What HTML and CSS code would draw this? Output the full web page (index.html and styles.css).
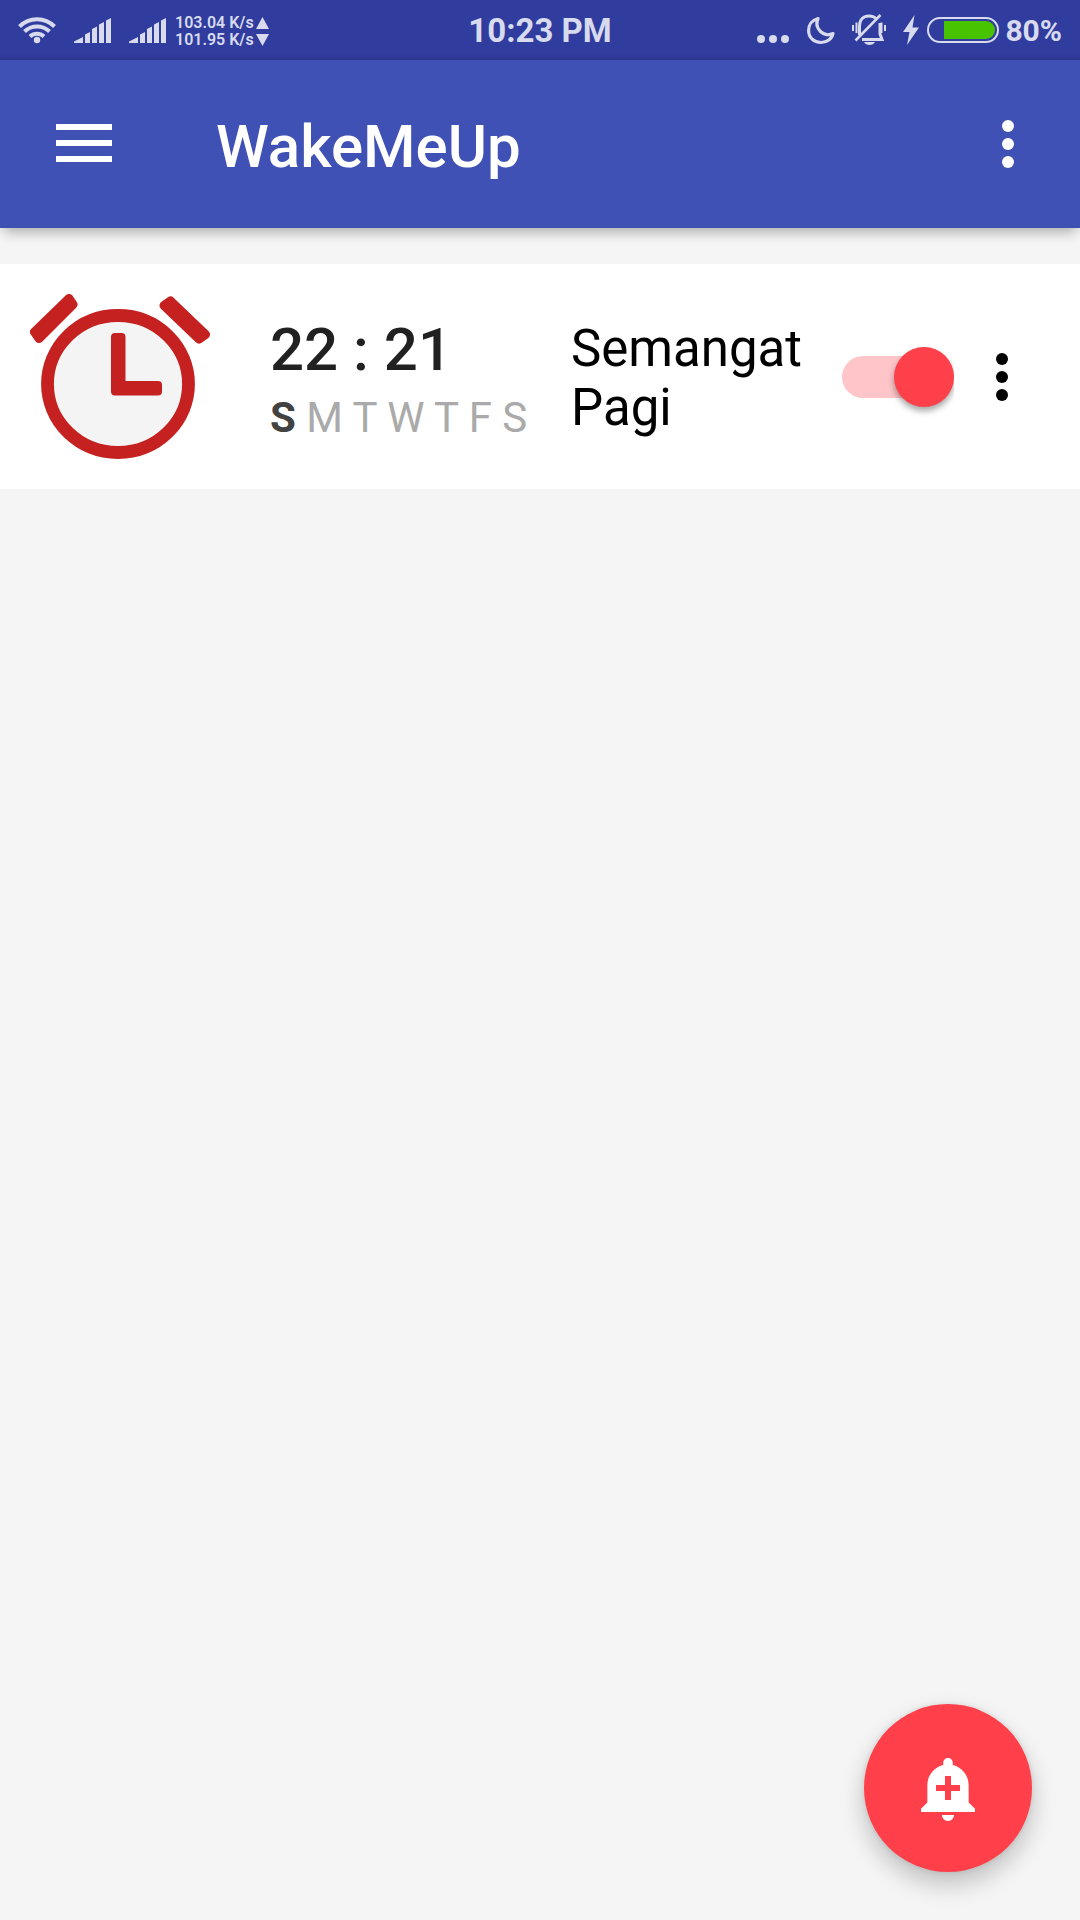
FILE: index.html
```html
<!DOCTYPE html>
<html lang="en">
<head>
<meta charset="utf-8">
<meta name="viewport" content="width=device-width, initial-scale=1">
<title>WakeMeUp</title>
<link rel="stylesheet" href="styles.css">
</head>
<body>
<div class="status">
  <div class="status-group">
    <svg class="wifi" viewBox="0 0 38 28" aria-hidden="true">
      <g fill="none" stroke="currentColor" stroke-width="4">
        <path d="M1.500 10.500A24.500 24.500 0 0 1 36.500 10.500"/>
        <path d="M6.500 15.500A18 18 0 0 1 31.500 15.500"/>
        <path d="M12 20.500A10.500 10.500 0 0 1 26 20.500"/>
      </g>
      <circle cx="19" cy="24" r="3.200" fill="currentColor"/>
    </svg>
    <svg class="signal" viewBox="0 0 37 28" aria-hidden="true"><path fill="currentColor" d="M0 27V25.500L9 21V27ZM11 27V18.500L16 16V27ZM18 27V13L23 10.500V27ZM25 27V8.500L30 6V27ZM32 27V4.500L37 2V27Z"/></svg>
    <svg class="signal" viewBox="0 0 37 28" aria-hidden="true"><path fill="currentColor" d="M0 27V25.500L9 21V27ZM11 27V18.500L16 16V27ZM18 27V13L23 10.500V27ZM25 27V8.500L30 6V27ZM32 27V4.500L37 2V27Z"/></svg>
    <div class="speed">
      <span>103.04 K/s</span>
      <svg viewBox="0 0 13 12" aria-hidden="true"><path fill="currentColor" d="M6.500 0L13 12H0Z"/></svg>
      <span>101.95 K/s</span>
      <svg viewBox="0 0 13 12" aria-hidden="true"><path fill="currentColor" d="M0 0H13L6.500 12Z"/></svg>
    </div>
  </div>
  <time class="clock">10:23 PM</time>
  <div class="status-group status-end">
    <svg class="more" viewBox="0 0 32 32" aria-hidden="true"><g fill="currentColor"><circle cx="4" cy="25" r="4"/><circle cx="16" cy="25" r="4"/><circle cx="28" cy="25" r="4"/></g></svg>
    <svg class="moon" viewBox="0 0 28 32" aria-hidden="true"><path fill="none" stroke="currentColor" stroke-width="3.200" stroke-linejoin="round" d="M11 4.500C5 6 1.600 11 1.600 16.500C1.600 23.500 7 28.500 14 28.500C20 28.500 25 25 26 19.500C22 21.500 17 21 13.500 17.500C10 14 9 9 11 4.500Z"/></svg>
    <svg class="mute" viewBox="0 0 34 32" aria-hidden="true">
      <g fill="none" stroke="currentColor">
        <path stroke-width="3" d="M7.500 21V12C7.500 5.500 11.500 2 17 2C20 2 22 2.500 24 4.500M28 9V20L30 25.500H10"/>
        <path stroke-width="2.500" d="M3.500 26.500L28.500 1"/>
        <path stroke-width="2" d="M1 11V17M4.500 8.500V19M29.500 8.500V19M33 11V17"/>
      </g>
      <path fill="currentColor" d="M12 28H23C21 32 14 32 12 28Z"/>
    </svg>
    <svg class="bolt" viewBox="0 0 16 30" aria-hidden="true"><path fill="currentColor" d="M11.500 0L0 17H6.500L4 30L16 12.500H9.500Z"/></svg>
    <svg class="battery" viewBox="0 0 72 26" aria-hidden="true">
      <rect x="1" y="1" width="70" height="24" rx="12" fill="none" stroke="currentColor" stroke-width="2"/>
      <path fill="#48c300" d="M17 4H59A9 9 0 0 1 59 22H17Z"/>
    </svg>
    <span class="percent">80%</span>
  </div>
</div>

<header class="appbar">
  <button class="icon-button" type="button" aria-label="Open navigation">
    <svg class="menu" viewBox="0 0 56 40" aria-hidden="true"><path fill="currentColor" d="M0 0H56V6H0ZM0 16H56V22H0ZM0 32H56V38H0Z"/></svg>
  </button>
  <h1 class="title">WakeMeUp</h1>
  <button class="icon-button" type="button" aria-label="More options">
    <svg class="dots" viewBox="0 0 12 48" aria-hidden="true"><g fill="currentColor"><circle cx="6" cy="6" r="6"/><circle cx="6" cy="24" r="6"/><circle cx="6" cy="42" r="6"/></g></svg>
  </button>
</header>

<main class="alarms">
  <article class="alarm">
    <svg class="alarm-icon" viewBox="0 0 180 165" aria-hidden="true">
      <ellipse cx="88" cy="90" rx="70.500" ry="68.500" fill="#f4f4f4" stroke="#c42120" stroke-width="12.800"/>
      <path fill="#c42120" stroke="#c42120" stroke-width="9" stroke-linejoin="round" d="M39 4.500L43 10.500L9 44.500L4.500 38ZM140.500 7L134 11.500L169 45L175.500 40.500Z"/>
      <path fill="#c42120" d="M85 39H91.500Q95.500 39 95.500 43V87H128Q132 87 132 91V97.500Q132 101.500 128 101.500H85Q81 101.500 81 97.500V43Q81 39 85 39Z"/>
    </svg>
    <div class="schedule">
      <time class="alarm-time">22 : 21</time>
      <p class="days"><b>S</b> M T W T F S</p>
    </div>
    <label class="alarm-label" for="alarm-on">Semangat Pagi</label>
    <input class="switch" id="alarm-on" type="checkbox" role="switch" checked>
    <button class="icon-button alarm-menu" type="button" aria-label="Alarm options">
      <svg class="dots" viewBox="0 0 12 48" aria-hidden="true"><g fill="currentColor"><circle cx="6" cy="6" r="6"/><circle cx="6" cy="24" r="6"/><circle cx="6" cy="42" r="6"/></g></svg>
    </button>
  </article>
</main>

<button class="fab" type="button" aria-label="Add alarm">
  <svg viewBox="0 0 24 24" aria-hidden="true"><path fill="currentColor" d="M10.010 21.010c0 1.100.89 1.990 1.990 1.990s1.990-.89 1.990-1.990h-3.980zm8.870-4.190V11c0-3.250-2.250-5.970-5.290-6.690v-.72C13.590 2.710 12.880 2 12 2s-1.590.71-1.590 1.590v.72C7.370 5.030 5.120 7.750 5.120 11v5.820L3 18.940V20h18v-1.060l-2.120-2.120zM16 13h-3v3h-2v-3H8v-2h3V8h2v3h3v2z"/></svg>
</button>
</body>
</html>
```

FILE: styles.css
```css
* {
  box-sizing: border-box;
}

body {
  margin: 0;
  min-height: 100vh;
  background: #f5f5f5;
  font-family: Roboto, sans-serif;
  color: #000;
}

h1,
p {
  margin: 0;
}

svg {
  display: block;
  flex: none;
}

button {
  padding: 0;
  border: 0;
  background: none;
  color: inherit;
  font: inherit;
}

.status {
  display: grid;
  grid-template-columns: 1fr auto 1fr;
  align-items: center;
  height: 60px;
  padding: 0 18px;
  background: linear-gradient(#303d9f 54px, #2b378c);
  color: #d8daee;
}

.status-group {
  display: flex;
  align-items: center;
}

.status-end {
  justify-content: flex-end;
}

.wifi {
  width: 38px;
  height: 28px;
}

.signal {
  width: 37px;
  height: 28px;
  margin-left: 18px;
}

.speed {
  display: grid;
  grid-template-columns: auto 13px;
  align-items: center;
  column-gap: 2px;
  margin-left: 9px;
  padding-top: 2px;
  font-size: 16px;
  line-height: 17px;
  font-weight: 600;
}

.speed svg {
  width: 13px;
  height: 12px;
}

.clock {
  padding-top: 2px;
  font-size: 33px;
  line-height: 40px;
  font-weight: 700;
}

.more {
  width: 32px;
  height: 32px;
}

.moon {
  width: 28px;
  height: 32px;
  margin-left: 18px;
}

.mute {
  width: 34px;
  height: 32px;
  margin-left: 17px;
}

.bolt {
  width: 16px;
  height: 30px;
  margin-left: 17px;
}

.battery {
  width: 72px;
  height: 26px;
  margin-left: 8px;
}

.percent {
  margin-left: 6px;
  padding-top: 2px;
  font-size: 30px;
  line-height: 36px;
  font-weight: 700;
}

.appbar {
  display: flex;
  align-items: center;
  height: 168px;
  padding: 0 24px;
  background: #3f51b5;
  color: #fff;
  box-shadow: 0 8px 12px -4px rgba(0, 0, 0, 0.3);
}

.icon-button {
  display: grid;
  flex: none;
  place-items: center;
  width: 96px;
  height: 120px;
}

.appbar .icon-button:first-child {
  width: 120px;
}

.menu {
  width: 56px;
  height: 40px;
}

.dots {
  width: 12px;
  height: 48px;
}

.title {
  flex: 1;
  padding: 6px 0 0 72px;
  font-size: 60px;
  line-height: 70px;
  font-weight: 500;
}

.alarms {
  padding-top: 36px;
}

.alarm {
  display: flex;
  align-items: center;
  padding: 30px;
  background: #fff;
}

.alarm-icon {
  width: 180px;
  height: 165px;
}

.schedule {
  width: 300px;
  margin-left: 60px;
  padding-top: 3px;
}

.alarm-time {
  display: block;
  font-size: 60px;
  line-height: 70px;
  font-weight: 500;
  color: #212121;
}

.days {
  padding-top: 8px;
  font-size: 42px;
  line-height: 49px;
  color: #aaa;
}

.days b {
  color: #424242;
}

.alarm-label {
  flex: 1;
  padding: 2px 0 0 1px;
  font-size: 51px;
  line-height: 59px;
}

.switch {
  appearance: none;
  display: grid;
  grid-template-columns: 1fr;
  align-items: center;
  flex: none;
  width: 112px;
  height: 60px;
  margin: 0;
  clip-path: inset(-20px 0);
}

.switch::before,
.switch::after {
  content: "";
  grid-area: 1 / 1;
}

.switch::before {
  height: 42px;
  border-radius: 21px;
  background: #ffc5c9;
}

.switch::after {
  justify-self: start;
  width: 60px;
  height: 60px;
  border-radius: 50%;
  background: #fd404a;
  box-shadow: 0 4px 6px rgba(0, 0, 0, 0.35);
}

.switch:checked::after {
  justify-self: end;
}

.fab {
  position: fixed;
  right: 48px;
  bottom: 48px;
  display: grid;
  place-items: center;
  width: 168px;
  height: 168px;
  border-radius: 50%;
  background: #ff404b;
  color: #fff;
  box-shadow: 0 12px 24px rgba(0, 0, 0, 0.22), 0 0 6px rgba(0, 0, 0, 0.1);
}

.fab svg {
  width: 72px;
  height: 72px;
}
```
